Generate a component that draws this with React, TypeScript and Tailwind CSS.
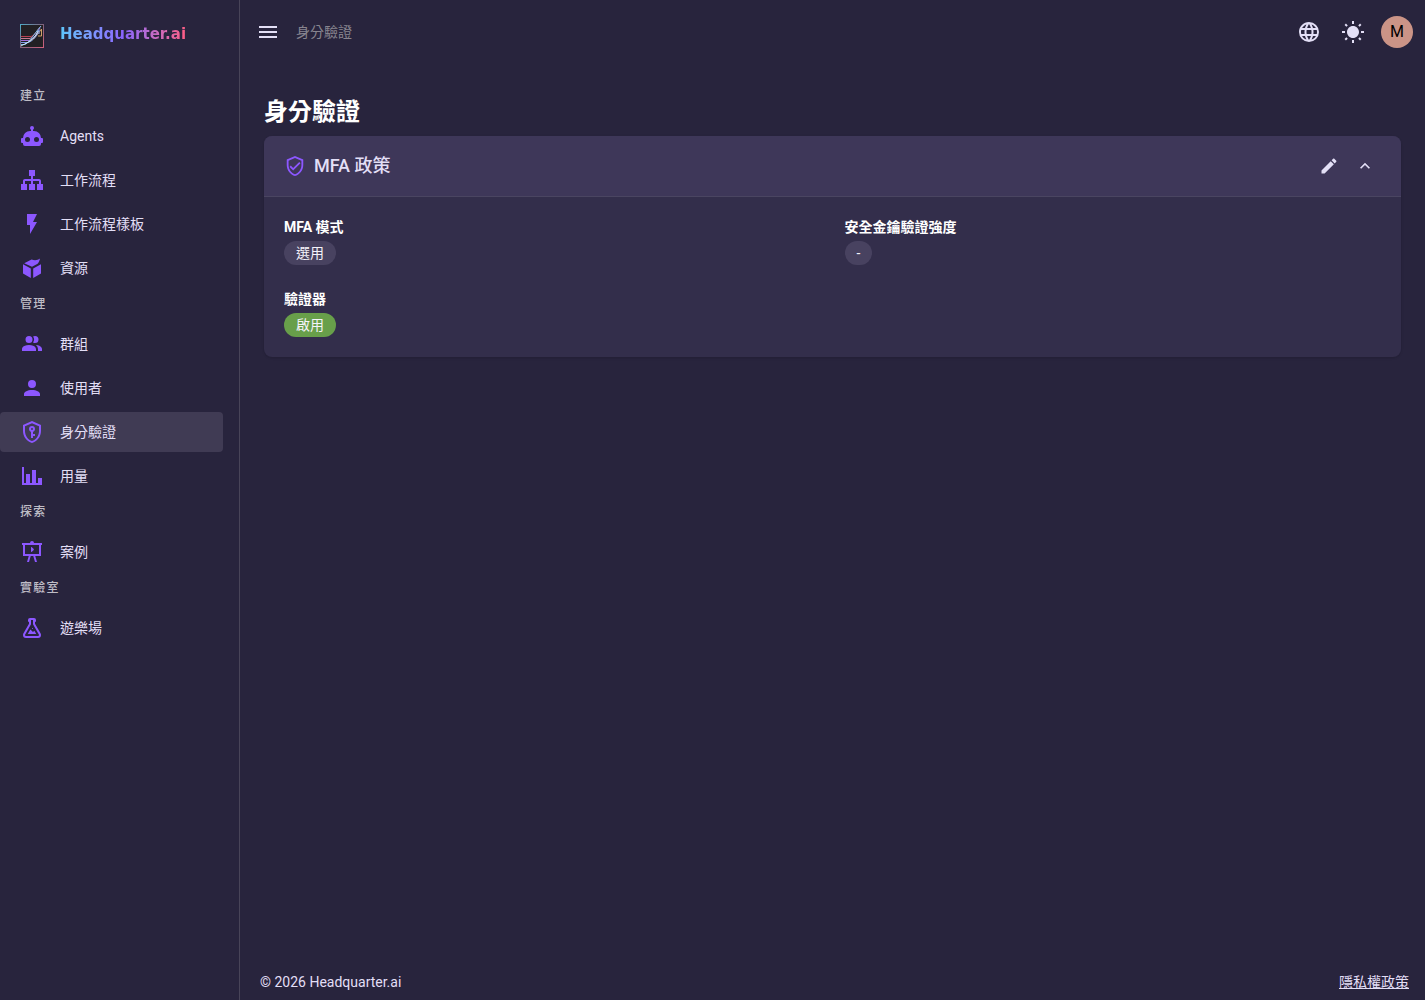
import { useState } from "react";
import type { ReactNode } from "react";

const SHIELD =
  "M21,11C21,16.55 17.16,21.74 12,23C6.84,21.74 3,16.55 3,11V5L12,1L21,5V11M12,21C15.75,20 19,15.54 19,11.22V6.3L12,3.18L5,6.3V11.22C5,15.54 8.25,20 12,21";

const icons = {
  robot:
    "M12,2A2,2 0 0,1 14,4C14,4.74 13.6,5.39 13,5.73V7H14A7,7 0 0,1 21,14H22A1,1 0 0,1 23,15V18A1,1 0 0,1 22,19H21V20A2,2 0 0,1 19,22H5A2,2 0 0,1 3,20V19H2A1,1 0 0,1 1,18V15A1,1 0 0,1 2,14H3A7,7 0 0,1 10,7H11V5.73C10.4,5.39 10,4.74 10,4A2,2 0 0,1 12,2M7.5,13A2.5,2.5 0 0,0 5,15.5A2.5,2.5 0 0,0 7.5,18A2.5,2.5 0 0,0 10,15.5A2.5,2.5 0 0,0 7.5,13M16.5,13A2.5,2.5 0 0,0 14,15.5A2.5,2.5 0 0,0 16.5,18A2.5,2.5 0 0,0 19,15.5A2.5,2.5 0 0,0 16.5,13Z",
  sitemap:
    "M9,2V8H11V11H5C3.89,11 3,11.89 3,13V16H1V22H7V16H5V13H11V16H9V22H15V16H13V13H19V16H17V22H23V16H21V13C21,11.89 20.11,11 19,11H13V8H15V2H9Z",
  flash: "M7,2V13H10V22L17,10H13L17,2H7Z",
  box: "M3,8.3L10.8,12.6V21.9L3,17.6V8.3M21,8.3V17.6L13.2,21.9V12.6L21,8.3M4.2,7.2L11.6,3.6C14.6,4.6 17.6,4.4 20,2.6C19.6,4.8 18.8,6.6 17.6,7.8L12,10.8L4.2,7.2Z",
  group:
    "M16 17V19H2V17S2 13 9 13 16 17 16 17M12.5 7.5A3.5 3.5 0 1 0 9 11A3.5 3.5 0 0 0 12.5 7.5M15.94 13A5.32 5.32 0 0 1 18 17V19H22V17S22 13.37 15.94 13M15 4A3.39 3.39 0 0 0 13.07 4.59A5 5 0 0 1 13.07 10.41A3.39 3.39 0 0 0 15 11A3.5 3.5 0 0 0 15 4Z",
  user: "M12,4A4,4 0 0,1 16,8A4,4 0 0,1 12,12A4,4 0 0,1 8,8A4,4 0 0,1 12,4M12,14C16.42,14 20,15.79 20,18V20H4V18C4,15.79 7.58,14 12,14Z",
  shieldKey:
    SHIELD +
    "M12,6A3,3 0 0,1 15,9C15,10.31 14.17,11.42 13,11.83V14H15V16H13V18H11V11.83C9.83,11.42 9,10.31 9,9A3,3 0 0,1 12,6M12,8A1,1 0 0,0 11,9A1,1 0 0,0 12,10A1,1 0 0,0 13,9A1,1 0 0,0 12,8Z",
  chart: "M22,21H2V3H4V19H6V10H10V19H12V6H16V19H18V14H22V21Z",
  presentation:
    "M2,3H10A2,2 0 0,1 12,1A2,2 0 0,1 14,3H22V5H21V16H15.25L17,22H15L13.25,16H10.75L9,22H7L8.75,16H3V5H2V3M5,5V14H19V5H5M11.85,11.85C11.76,11.94 11.64,12 11.5,12A0.5,0.5 0 0,1 11,11.5V7.5A0.5,0.5 0 0,1 11.5,7C11.64,7 11.76,7.06 11.85,7.15L13.25,8.54C13.57,8.86 13.89,9.18 13.89,9.5C13.89,9.82 13.57,10.14 13.25,10.46L11.85,11.85Z",
  flask:
    "M5,19A1,1 0 0,0 6,20H18A1,1 0 0,0 19,19C19,18.79 18.93,18.59 18.82,18.43L13,8.35V4H11V8.35L5.18,18.43C5.07,18.59 5,18.79 5,19M6,22A3,3 0 0,1 3,19C3,18.4 3.18,17.84 3.5,17.37L9,7.81V6A1,1 0 0,1 8,5V4A2,2 0 0,1 10,2H14A2,2 0 0,1 16,4V5A1,1 0 0,1 15,6V7.81L20.5,17.37C20.82,17.84 21,18.4 21,19A3,3 0 0,1 18,22H6M13,16L14.34,14.66L16.27,18H7.73L10.39,13.39L13,16M12.5,12A0.5,0.5 0 0,1 13,12.5A0.5,0.5 0 0,1 12.5,13A0.5,0.5 0 0,1 12,12.5A0.5,0.5 0 0,1 12.5,12Z",
  shieldCheck: SHIELD + "M10,17L6,13L7.41,11.59L10,14.17L16.59,7.58L18,9L10,17Z",
  menu: "M3,6H21V8H3V6M3,11H21V13H3V11M3,16H21V18H3V16Z",
  web: "M16.36,14C16.44,13.34 16.5,12.68 16.5,12C16.5,11.32 16.44,10.66 16.36,10H19.74C19.9,10.64 20,11.31 20,12C20,12.69 19.9,13.36 19.74,14M14.59,19.56C15.19,18.45 15.65,17.25 15.97,16H18.92C17.96,17.65 16.43,18.93 14.59,19.56M14.34,14H9.66C9.56,13.34 9.5,12.68 9.5,12C9.5,11.32 9.56,10.65 9.66,10H14.34C14.43,10.65 14.5,11.32 14.5,12C14.5,12.68 14.43,13.34 14.34,14M12,19.96C11.17,18.76 10.5,17.43 10.09,16H13.91C13.5,17.43 12.83,18.76 12,19.96M8,8H5.08C6.03,6.34 7.57,5.06 9.4,4.44C8.8,5.55 8.35,6.75 8,8M5.08,16H8C8.35,17.25 8.8,18.45 9.4,19.56C7.57,18.93 6.03,17.65 5.08,16M4.26,14C4.1,13.36 4,12.69 4,12C4,11.31 4.1,10.64 4.26,10H7.64C7.56,10.66 7.5,11.32 7.5,12C7.5,12.68 7.56,13.34 7.64,14M12,4.03C12.83,5.23 13.5,6.57 13.91,8H10.09C10.5,6.57 11.17,5.23 12,4.03M18.92,8H15.97C15.65,6.75 15.19,5.55 14.59,4.44C16.43,5.07 17.96,6.34 18.92,8M12,2C6.47,2 2,6.5 2,12A10,10 0 0,0 12,22A10,10 0 0,0 22,12A10,10 0 0,0 12,2Z",
  sun: "M3.55 19.09L4.96 20.5L6.76 18.71L5.34 17.29M12 6C8.69 6 6 8.69 6 12S8.69 18 12 18 18 15.31 18 12C18 8.68 15.31 6 12 6M20 13H23V11H20M17.24 18.71L19.04 20.5L20.45 19.09L18.66 17.29M20.45 5L19.04 3.6L17.24 5.39L18.66 6.81M13 1H11V4H13M6.76 5.39L4.96 3.6L3.55 5L5.34 6.81L6.76 5.39M1 13H4V11H1M13 20H11V23H13",
  pencil:
    "M20.71,7.04C21.1,6.65 21.1,6 20.71,5.63L18.37,3.29C18,2.9 17.35,2.9 16.96,3.29L15.12,5.12L18.87,8.87M3,17.25V21H6.75L17.81,9.93L14.06,6.18L3,17.25Z",
  chevronUp: "M7.41,15.41L12,10.83L16.59,15.41L18,14L12,8L6,14L7.41,15.41Z",
};

type IconName = keyof typeof icons;

function Icon({ name, className = "size-6" }: { name: IconName; className?: string }) {
  return (
    <svg viewBox="0 0 24 24" fill="currentColor" fillRule="evenodd" aria-hidden="true" className={`shrink-0 ${className}`}>
      <path d={icons[name]} />
    </svg>
  );
}

const sections: { title: string; items: { icon: IconName; label: string; active?: boolean }[] }[] = [
  {
    title: "建立",
    items: [
      { icon: "robot", label: "Agents" },
      { icon: "sitemap", label: "工作流程" },
      { icon: "flash", label: "工作流程樣板" },
      { icon: "box", label: "資源" },
    ],
  },
  {
    title: "管理",
    items: [
      { icon: "group", label: "群組" },
      { icon: "user", label: "使用者" },
      { icon: "shieldKey", label: "身分驗證", active: true },
      { icon: "chart", label: "用量" },
    ],
  },
  { title: "探索", items: [{ icon: "presentation", label: "案例" }] },
  { title: "實驗室", items: [{ icon: "flask", label: "遊樂場" }] },
];

function Logo() {
  return (
    <svg viewBox="0 0 24 24" fill="none" aria-hidden="true" className="size-6 shrink-0">
      <defs>
        <linearGradient id="frame" x1="0" y1="0" x2="1" y2="1">
          <stop offset="0" stopColor="#4fa9c4" />
          <stop offset="0.5" stopColor="#80627c" />
          <stop offset="1" stopColor="#d0607c" />
        </linearGradient>
      </defs>
      <rect x="0.5" y="0.5" width="23" height="23" fill="#222024" stroke="url(#frame)" />
      <g strokeWidth="1">
        <path d="M1 12.5H11L14 11" stroke="#b8404f" />
        <path d="M1 14.5H10C13 13 16 8 21 2" stroke="#c77a91" />
        <path d="M1 16.5H9C14 15 18 8 20 4" stroke="#a06fd8" />
        <path d="M9 17C14 16 18 10 21.5 5V12H18" stroke="#d1a26a" />
        <path d="M1 18.5H8C13 17 17 12 19 6V10" stroke="#7f9be8" />
        <path d="M1 20.5H5C11 17 13 11 21 2" stroke="#75b8ea" />
        <path d="M1 22C6 19 11 18 16 11L18 7" stroke="#d6edf5" />
      </g>
    </svg>
  );
}

function Sidebar() {
  return (
    <aside className="w-60 shrink-0 border-r border-[#484458]">
      <a href="#" className="mt-6 flex h-6 items-center gap-4 pl-5">
        <Logo />
        <span className="bg-linear-to-r from-[#5cc4fa] via-[#8a63ff] to-[#ff5c83] bg-clip-text pb-1 font-['DejaVu_Sans',sans-serif] text-[15px] leading-5 font-bold text-transparent">
          Headquarter.ai
        </span>
      </a>
      <nav className="mt-9">
        {sections.map((section) => (
          <section key={section.title}>
            <h2 className="mb-2 pl-5 text-xs leading-6 font-medium tracking-widest text-[#bfbdc6]">{section.title}</h2>
            {section.items.map((item) => (
              <a
                key={item.label}
                href="#"
                aria-current={item.active ? "page" : undefined}
                className={`mr-4 mb-1 flex h-10 items-center gap-4 rounded-r pl-5 text-sm ${item.active ? "rounded-l-sm bg-[#403b54]" : ""}`}
              >
                <Icon name={item.icon} className="size-6 text-[#8c57ff]" />
                {item.label}
              </a>
            ))}
          </section>
        ))}
      </nav>
    </aside>
  );
}

function Field({ label, children, on = false }: { label: string; children: ReactNode; on?: boolean }) {
  return (
    <div>
      <dt className="text-sm leading-5 font-bold text-white">{label}</dt>
      <dd className="mt-1 flex">
        <span className={`h-6 rounded-full px-3 text-sm leading-6 text-[#f4f2fa] ${on ? "bg-[#689f4a]" : "bg-[#484260]"}`}>{children}</span>
      </dd>
    </div>
  );
}

export default function App() {
  const [open, setOpen] = useState(true);
  return (
    <div
      lang="zh-Hant"
      className="flex min-h-screen bg-[#28243d] font-[Roboto,'Noto_Sans_CJK_TC',sans-serif] text-[#e3dff6]"
    >
      <Sidebar />
      <div className="flex min-w-0 flex-1 flex-col">
        <header className="flex h-16 items-center pr-3 pl-4">
          <button type="button" aria-label="選單">
            <Icon name="menu" />
          </button>
          <span className="ml-4 text-sm text-[#87848f]">身分驗證</span>
          <div className="ml-auto flex items-center">
            <button type="button" aria-label="語言" className="mr-5">
              <Icon name="web" />
            </button>
            <button type="button" aria-label="主題" className="mr-4">
              <Icon name="sun" />
            </button>
            <button type="button" className="size-8 rounded-full bg-[#cb9487] text-base text-black">
              M
            </button>
          </div>
        </header>
        <main className="flex-1 px-6 pt-8">
          <h1 className="text-2xl leading-8 font-semibold text-white">身分驗證</h1>
          <section className="mt-2 overflow-hidden rounded-lg bg-[#332e4b] shadow">
            <div className="flex h-[61px] items-center border-b border-[#4a4561] bg-[#3e3759] px-5">
              <Icon name="shieldCheck" className="size-[22px] text-[#8c57ff]" />
              <h2 className="ml-2 text-lg font-medium">MFA 政策</h2>
              <div className="ml-auto flex gap-4 pr-1.5">
                <button type="button" aria-label="編輯">
                  <Icon name="pencil" className="size-5" />
                </button>
                <button type="button" aria-label="收合" aria-expanded={open} onClick={() => setOpen(!open)}>
                  <Icon name="chevronUp" className={open ? "size-5" : "size-5 rotate-180"} />
                </button>
              </div>
            </div>
            {open && (
              <dl className="grid grid-cols-2 gap-6 p-5">
                <Field label="MFA 模式">選用</Field>
                <Field label="安全金鑰驗證強度">-</Field>
                <Field label="驗證器" on>
                  啟用
                </Field>
              </dl>
            )}
          </section>
        </main>
        <footer className="flex h-9 items-center justify-between pr-4 pl-5 text-sm">
          <span>© 2026 Headquarter.ai</span>
          <a href="#" className="underline">
            隱私權政策
          </a>
        </footer>
      </div>
    </div>
  );
}
